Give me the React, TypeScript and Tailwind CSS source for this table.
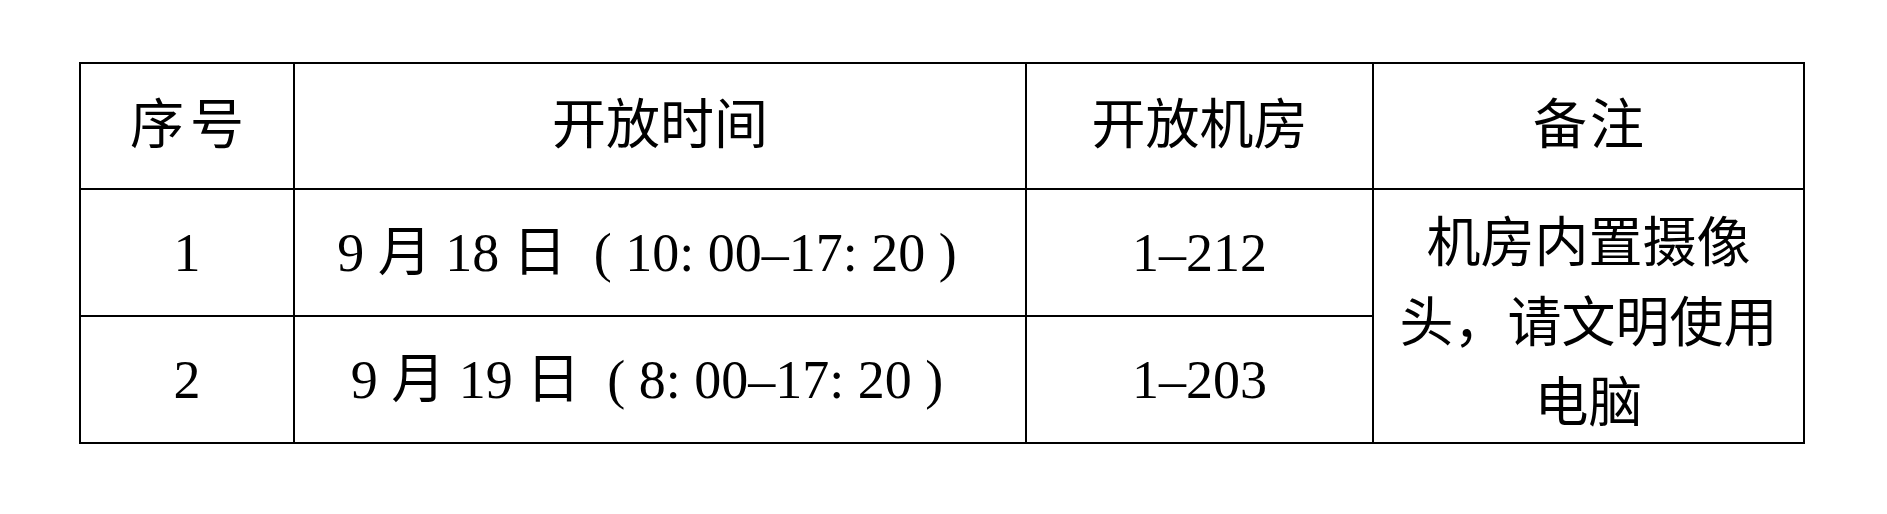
const HEADERS = [
  { label: "序号", className: "tracking-[6px] pl-[6px]" },
  { label: "开放时间", className: "" },
  { label: "开放机房", className: "" },
  { label: "备注", className: "tracking-[3px] pl-[3px]" },
];

const ROWS = [
  { id: "1", time: "9 月 18 日  ( 10: 00–17: 20 )", room: "1–212" },
  { id: "2", time: "9 月 19 日  ( 8: 00–17: 20 )", room: "1–203" },
];

const cell =
  "flex items-center justify-center border-r-2 border-b-2 border-black whitespace-pre";

export default function App() {
  return (
    <div className="min-h-screen w-full bg-white pt-[62px] pl-[79px] text-black font-['Liberation_Serif','Noto_Sans_CJK_SC',serif] text-[54px] leading-none">
      <div className="grid w-fit grid-cols-[214px_732px_347px_431px] grid-rows-[126px_127px_127px] border-l-2 border-t-2 border-black">
        {/* Header */}
        {HEADERS.map((h) => (
          <div key={h.label} className={`${cell} ${h.className}`}>
            {h.label}
          </div>
        ))}

        {/* Row 1 */}
        <div className={cell}>{ROWS[0].id}</div>
        <div className={`${cell} pr-[26px]`}>{ROWS[0].time}</div>
        <div className={cell}>{ROWS[0].room}</div>
        <div className="row-span-2 flex items-center justify-center border-r-2 border-b-2 border-black px-2 pt-[16px]">
          <p className="text-center leading-[80px]">机房内置摄像头，请文明使用电脑</p>
        </div>

        {/* Row 2 */}
        <div className={cell}>{ROWS[1].id}</div>
        <div className={`${cell} pr-[26px]`}>{ROWS[1].time}</div>
        <div className={cell}>{ROWS[1].room}</div>
      </div>
    </div>
  );
}
